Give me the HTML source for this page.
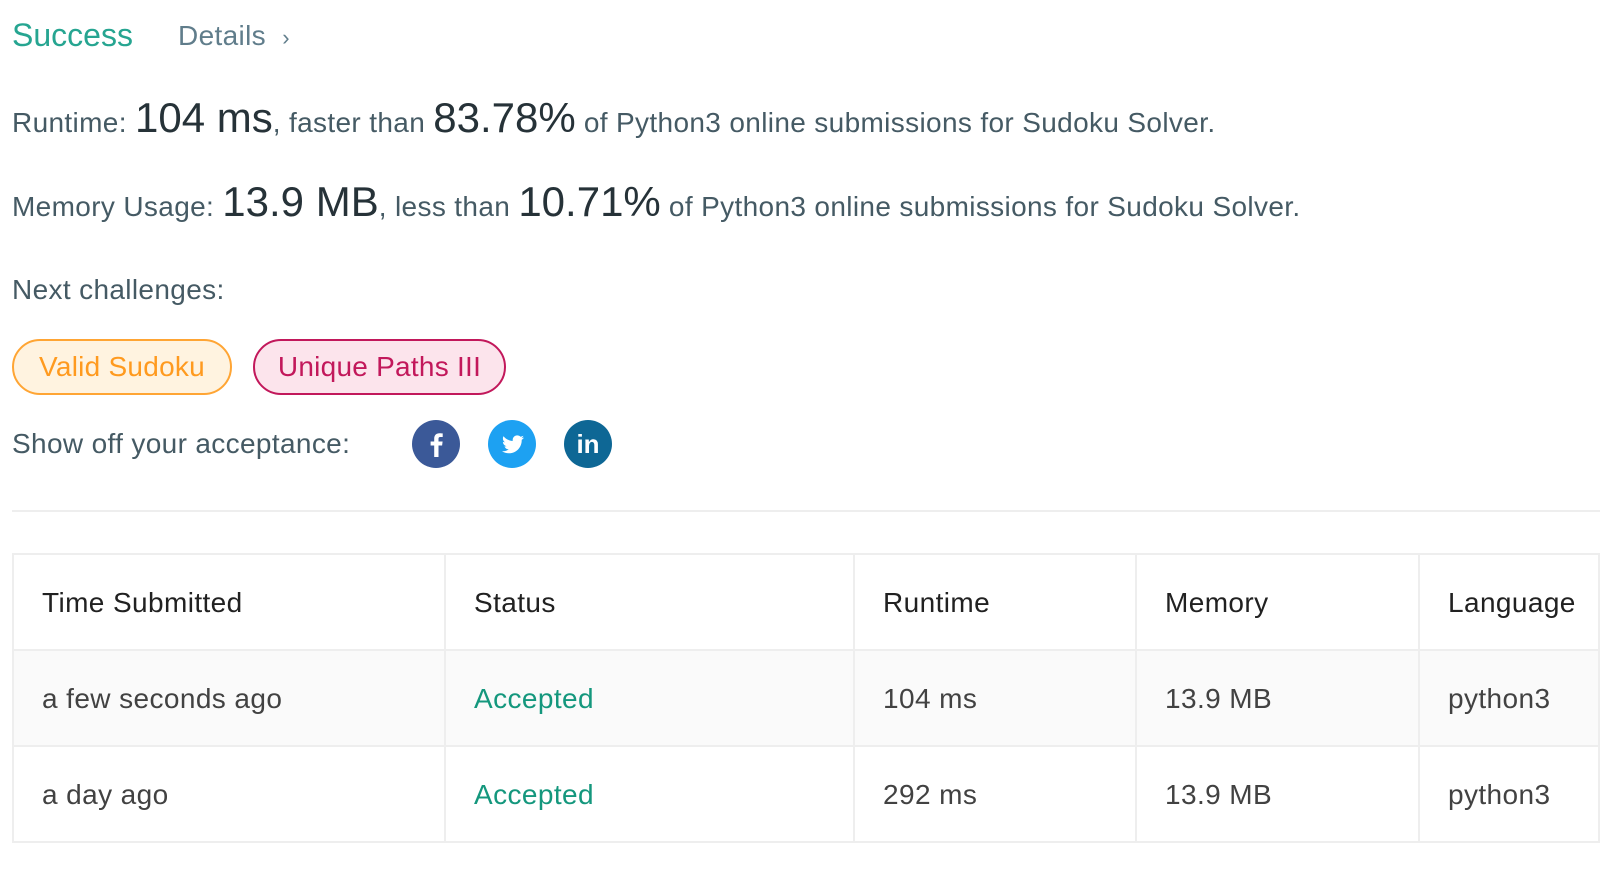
<!DOCTYPE html>
<html><head><meta charset="utf-8">
<style>
*{margin:0;padding:0;box-sizing:border-box}
body{width:1616px;height:876px;background:#fff;font-family:"Liberation Sans",sans-serif;color:#455a64;position:relative;overflow:hidden}
.a{position:absolute;white-space:nowrap}
.t{font-size:28px;letter-spacing:0.35px;height:50px;line-height:50px}
.big{font-size:42px;color:#263238;letter-spacing:0}
.pill{position:absolute;height:56px;border-radius:28px;font-size:28px;line-height:52px;text-align:center;letter-spacing:0.25px}
table{position:absolute;left:12px;top:553px;width:1588px;border-collapse:collapse;font-size:28px;letter-spacing:0.4px;color:#212121}
td{border:2px solid #eeeeee;padding-left:28px;height:96px;padding-top:2px}
tr.g td{background:#fafafa}
.acc{color:#14977d}
</style></head><body>
<div class="a" style="left:12px;top:10px;font-size:32px;line-height:50px;color:#26a591">Success</div>
<div class="a t" style="left:178px;top:11px;color:#607d8b">Details&nbsp;&nbsp;<span style="font-size:22px">›</span></div>

<div class="a t" style="left:12px;top:93px">Runtime: <span class="big">104 ms</span>, faster than <span class="big">83.78%</span> of Python3 online submissions for Sudoku Solver.</div>
<div class="a t" style="left:12px;top:177px">Memory Usage: <span class="big">13.9 MB</span>, less than <span class="big">10.71%</span> of Python3 online submissions for Sudoku Solver.</div>

<div class="a t" style="left:12px;top:265px">Next challenges:</div>

<div class="pill" style="left:12px;top:339px;width:220px;background:#fff3e0;border:2px solid #ffa534;color:#ff9a1f">Valid Sudoku</div>
<div class="pill" style="left:253px;top:339px;width:253px;background:#fce4ec;border:2px solid #c2185b;color:#c2185b">Unique Paths III</div>

<div class="a t" style="left:12px;top:419px">Show off your acceptance:</div>
<svg class="a" style="left:408px;top:418px" width="210" height="52">
<g transform="translate(28,26)">
<circle r="24" fill="#3b5998"/>
<path d="M2.5 13V1.5h3.6l.5-4H2.5v-2.6c0-1.2.4-1.9 2-1.9h2.2v-3.6c-.4 0-1.7-.2-3.2-.2-3.2 0-5.3 1.9-5.3 5.4v2.9h-3.6v4h3.6V13z" fill="#fff"/>
</g>
<g transform="translate(104,26)">
<circle r="24" fill="#1da1f2"/>
<path d="M12 -6.5c-.8.4-1.7.6-2.6.7.9-.6 1.6-1.4 2-2.5-.9.5-1.900.9-2.9 1.1-.8-.9-2-1.4-3.3-1.4-2.5 0-4.5 2-4.5 4.5 0 .4 0 .7.1 1-3.8-.2-7.1-2-9.3-4.7-.4.7-.6 1.4-.6 2.3 0 1.6.8 2.9 2 3.8-.7 0-1.4-.2-2-.6v.1c0 2.2 1.6 4 3.6 4.4-.4.1-.8.2-1.2.2-.3 0-.6 0-.8-.1.6 1.8 2.2 3.1 4.2 3.1-1.5 1.2-3.5 1.9-5.6 1.9H-10c2 1.3 4.4 2 6.9 2 8.3 0 12.8-6.9 12.8-12.8v-.6c.9-.6 1.7-1.4 2.3-2.4z" fill="#fff"/>
</g>
<g transform="translate(180,26)">
<circle r="24" fill="#0e6795"/>
<text x="0" y="9" text-anchor="middle" font-family="Liberation Sans" font-weight="bold" font-size="26" fill="#fff">in</text>
</g>
</svg>

<div class="a" style="left:12px;top:510px;width:1588px;height:2px;background:#eeeeee"></div>

<table>
<tr><td style="width:432px">Time Submitted</td><td style="width:409px">Status</td><td style="width:282px">Runtime</td><td style="width:283px">Memory</td><td>Language</td></tr>
<tr class="g"><td style="color:#424242">a few seconds ago</td><td class="acc">Accepted</td><td style="color:#424242">104 ms</td><td style="color:#424242">13.9 MB</td><td style="color:#424242">python3</td></tr>
<tr><td style="color:#424242">a day ago</td><td class="acc">Accepted</td><td style="color:#424242">292 ms</td><td style="color:#424242">13.9 MB</td><td style="color:#424242">python3</td></tr>
</table>
</body></html>
